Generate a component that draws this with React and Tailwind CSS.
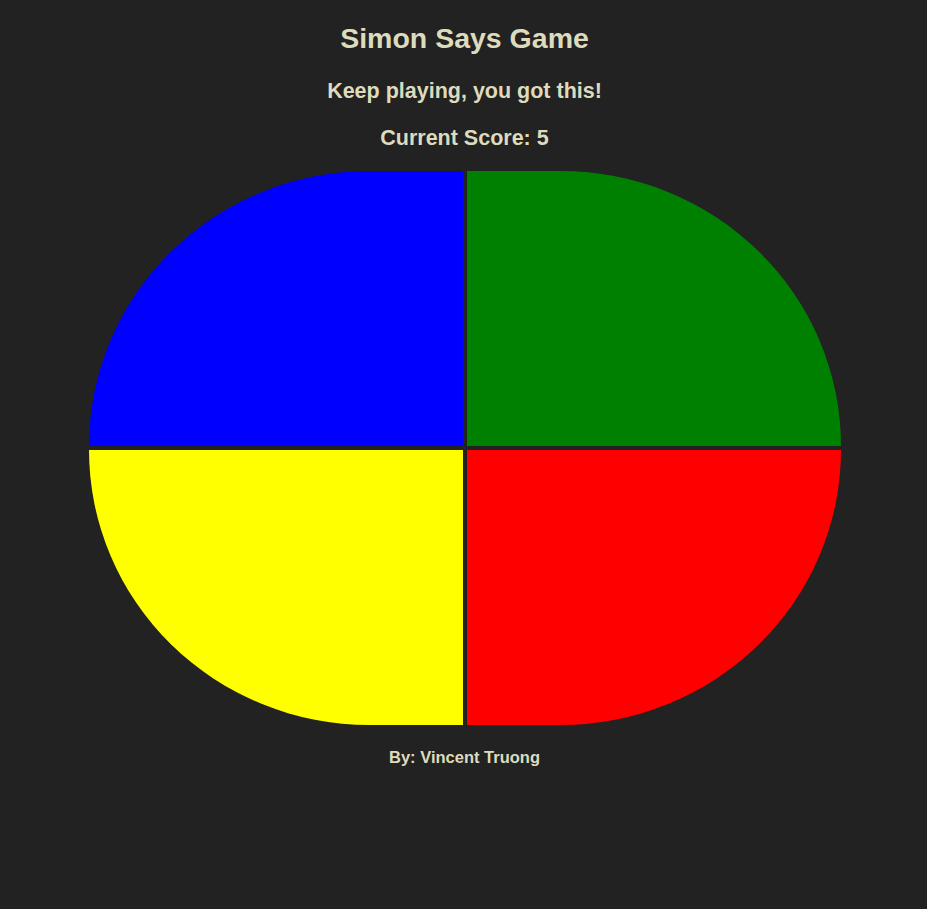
import React, { useState } from 'react';

const App = () => {
  const [score] = useState(5);

  return (
    // page: dark background, full height, centered column
    <div className="min-h-screen bg-[#222222] text-[#dedbbd] font-['Liberation_Sans',Arial,sans-serif] font-bold flex flex-col items-center pt-[21px] pl-[2px]">
      <h1 className="text-[28.5px] leading-[34px] m-0">Simon Says Game</h1>
      <h3 className="text-[21.5px] leading-[26px] mt-[22.5px]">Keep playing, you got this!</h3>
      <h3 className="text-[21.5px] leading-[26px] mt-[21px]">Current Score: {score}</h3>

      {/* game board: four quadrants */}
      <div className="grid grid-cols-[374px_374px] grid-rows-[275px_275px] gap-1 mt-[20.5px]">
        <button className="bg-[#0000ff] rounded-tl-[75%_100%] border-none cursor-pointer" />
        <button className="bg-[#008000] rounded-tr-[75%_100%] border-none cursor-pointer" />
        <button className="bg-[#ffff00] rounded-bl-[75%_100%] border-none cursor-pointer" />
        <button className="bg-[#ff0000] rounded-br-[75%_100%] border-none cursor-pointer" />
      </div>

      <p className="text-[16.5px] leading-[20px] mt-[22px]">By: Vincent Truong</p>
    </div>
  );
};

export default App;
